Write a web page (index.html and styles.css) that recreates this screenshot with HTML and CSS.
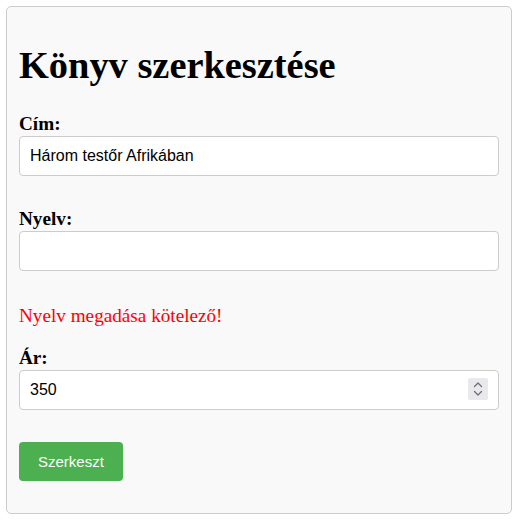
FILE: index.html
```html
<!DOCTYPE html>
<html lang="hu">
<head>
<meta charset="utf-8">
<title>Könyv szerkesztése</title>
<link rel="stylesheet" href="styles.css">
</head>
<body>
<form class="card">
  <h1 class="title">Könyv szerkesztése</h1>
  <label class="label" for="cim">Cím:</label>
  <input class="field" id="cim" type="text" value="Három testőr Afrikában">
  <label class="label label-gap" for="nyelv">Nyelv:</label>
  <input class="field" id="nyelv" type="text" value="">
  <p class="error">Nyelv megadása kötelező!</p>
  <label class="label" for="ar">Ár:</label>
  <div class="number-wrap">
    <input class="field field-number" id="ar" type="number" value="350">
    <span class="spin" aria-hidden="true">
      <svg width="20" height="22" viewBox="0 0 20 22">
        <path d="M6.5 8.5 L10 5 L13.5 8.5" fill="none" stroke="#6e6e73" stroke-width="1.3" stroke-linecap="round" stroke-linejoin="round"/>
        <path d="M6.5 13.5 L10 17 L13.5 13.5" fill="none" stroke="#6e6e73" stroke-width="1.3" stroke-linecap="round" stroke-linejoin="round"/>
      </svg>
    </span>
  </div>
  <div class="actions">
    <button class="btn" type="button">Szerkeszt</button>
  </div>
</form>
</body>
</html>
```

FILE: styles.css
```css
html, body {
  margin: 0;
  padding: 0;
  background: #ffffff;
}

body {
  font-family: "Liberation Serif", "Times New Roman", serif;
  font-size: 19.2px;
  color: #000;
}

.card {
  margin: 6px 5px 13px 6px;
  border: 1px solid #cccccc;
  border-radius: 5px;
  background: #f9f9f9;
  padding: 12px 12px 12px 12px;
  display: flex;
  flex-direction: column;
}

.title {
  margin: 24px 0 26px 0;
  font-size: 38.4px;
  font-weight: bold;
  line-height: 44px;
}

.label {
  display: block;
  font-weight: bold;
  line-height: 22px;
  margin-bottom: 1px;
}

.label-gap {
  margin-top: 32px;
}

.field {
  box-sizing: border-box;
  width: 100%;
  height: 40px;
  margin: 0;
  padding: 0 10px;
  border: 1px solid #cccccc;
  border-radius: 4px;
  background: #ffffff;
  font-family: "Liberation Sans", Arial, sans-serif;
  font-size: 16px;
  color: #000;
  outline: none;
}

.field-number {
  -moz-appearance: textfield;
  appearance: textfield;
}

.field-number::-webkit-inner-spin-button,
.field-number::-webkit-outer-spin-button {
  -webkit-appearance: none;
  margin: 0;
}

.error {
  margin: 34px 0 20px 0;
  color: #ff0000;
  line-height: 22px;
}

.number-wrap {
  position: relative;
}

.spin {
  position: absolute;
  top: 8px;
  right: 11px;
  width: 20px;
  height: 22px;
  background: #e9e9ed;
  border-radius: 2px;
  display: flex;
}

.actions {
  margin-top: 32px;
  margin-bottom: 20px;
  display: flex;
}

.btn {
  background: #4caf50;
  color: #ffffff;
  border: none;
  border-radius: 4px;
  height: 39px;
  padding: 0 19px;
  font-family: "Liberation Sans", Arial, sans-serif;
  font-size: 15px;
  cursor: pointer;
}
```
